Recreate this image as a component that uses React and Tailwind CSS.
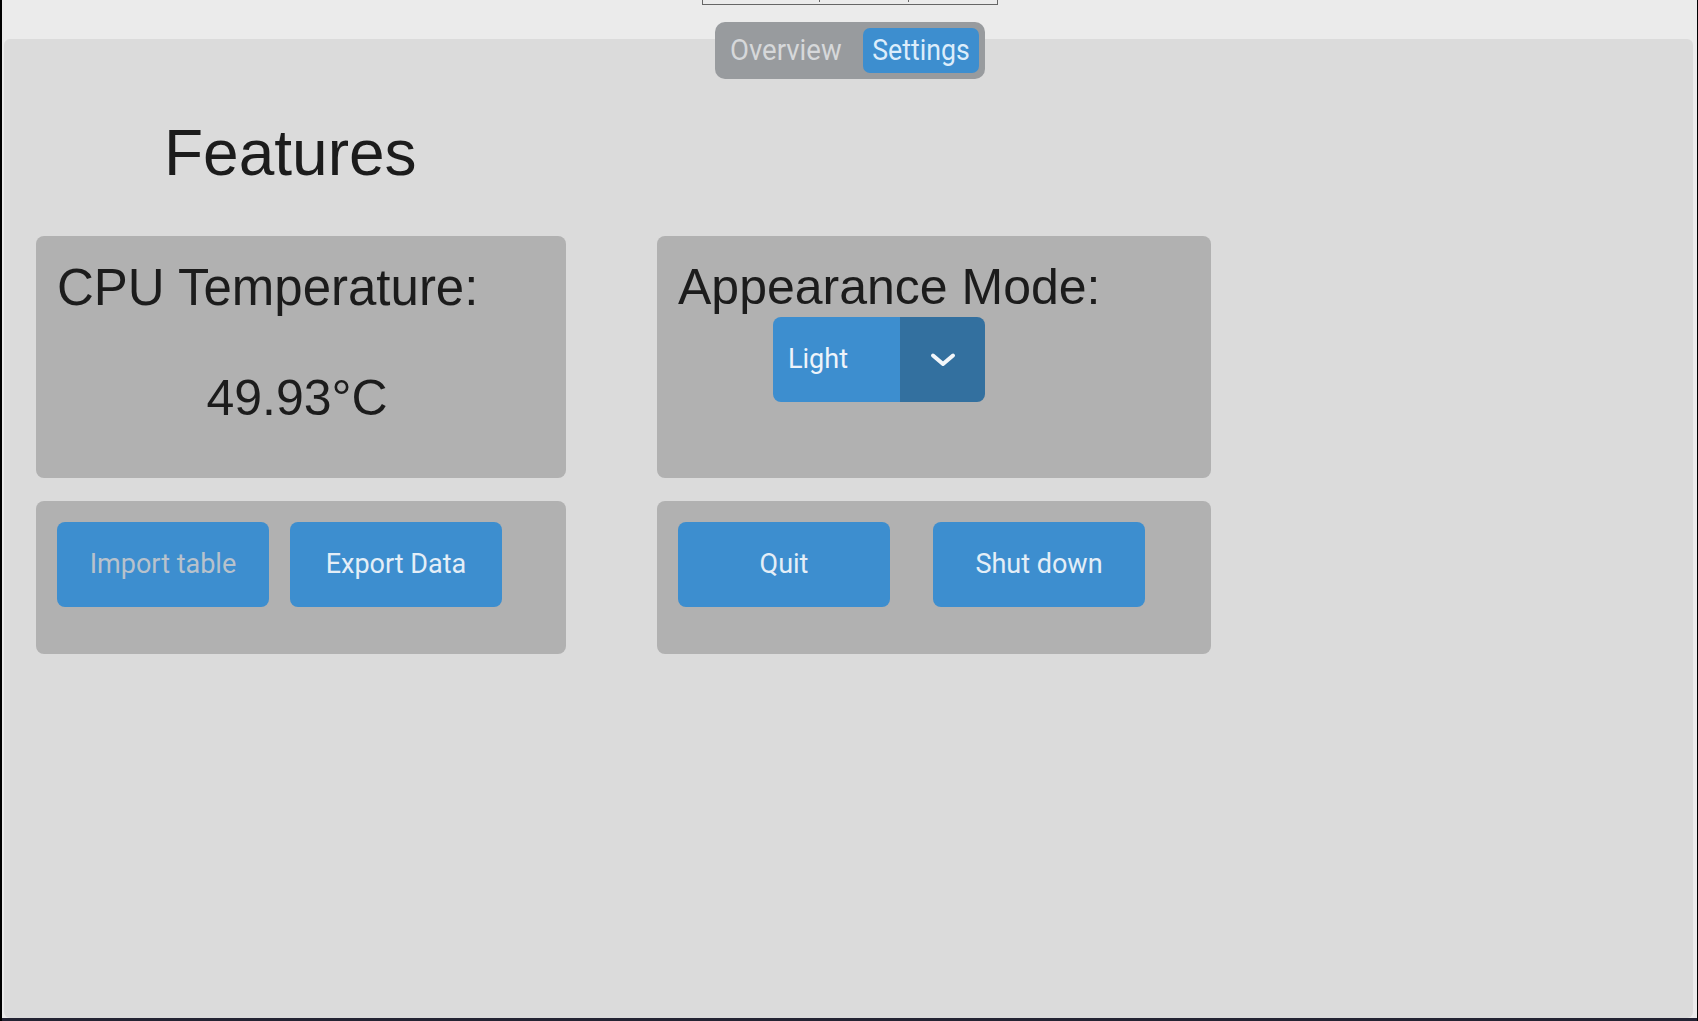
import React from 'react';

const sans = { fontFamily: '"Liberation Sans", Arial, sans-serif' };
const roboto = { fontFamily: 'Roboto, "Noto Sans", sans-serif' };

const ActionButton = ({ label, dim }) => (
    <button
        className={`w-[212px] h-[85px] rounded-[8px] bg-[#3d8ecf] flex items-center justify-center text-[27px] leading-none ${dim ? 'text-[#b8c2cc]' : 'text-[#e4eef7]'}`}
        style={roboto}
    >
        {label}
    </button>
);

const App = () => {
    return (
        <div className="relative w-[1698px] h-[1021px] overflow-hidden flex flex-col bg-[#ebebeb] border-l-2 border-r border-black">
            {/* top strip with the little bracket line */}
            <div className="h-[39px] shrink-0 flex justify-center">
                <div className="w-[296px] h-[5px] border-x border-b border-[#666] flex items-start">
                    <div className="ml-[116px] w-px h-[2px] bg-[#666]" />
                    <div className="ml-[88px] w-px h-[2px] bg-[#666]" />
                </div>
            </div>

            {/* segmented tab, sits over the strip and the panel */}
            <div className="absolute top-[22px] left-1/2 -translate-x-1/2 flex gap-[6px] p-[6px] rounded-[10px] bg-[#989b9e]" style={roboto}>
                <div className="w-[136px] h-[45px] flex items-center justify-center pr-[6px] text-[#d6d8da]">
                    <span className="inline-block text-[29px] leading-none scale-x-[0.95]">Overview</span>
                </div>
                <div className="w-[116px] h-[45px] rounded-[7px] bg-[#3d8ecf] flex items-center justify-center text-[#dcedfb]">
                    <span className="inline-block text-[29px] leading-none scale-x-[0.92]">Settings</span>
                </div>
            </div>

            <main className="flex-1 ml-[2px] mr-[4px] rounded-[6px] bg-[#dbdbdb] pl-[32px] pt-[82px]">
                <h1 className="ml-[128px] text-[64px] leading-none text-[#1c1c1c]" style={sans}>
                    Features
                </h1>

                <div className="mt-[51px] grid grid-cols-[530px_554px] grid-rows-[242px_153px] gap-x-[91px] gap-y-[23px]">
                    <section className="rounded-[8px] bg-[#b1b1b1] pt-[26px] pl-[21px] flex flex-col text-[#1c1c1c]" style={sans}>
                        <div className="text-[51px] leading-none whitespace-nowrap">CPU Temperature:</div>
                        <div className="mt-[60px] pr-[29px] text-center text-[50px] leading-none">49.93°C</div>
                    </section>

                    <section className="rounded-[8px] bg-[#b1b1b1] pt-[26px] pl-[21px] flex flex-col text-[#1c1c1c]" style={sans}>
                        <div className="text-[50px] leading-none whitespace-nowrap">Appearance Mode:</div>
                        <div className="mt-[5px] ml-[95px] flex w-[212px] h-[85px] rounded-[8px] overflow-hidden" style={roboto}>
                            <div className="w-[127px] bg-[#3d8ecf] flex items-center pl-[15px] text-[27px] leading-none text-[#eef4fa]">
                                Light
                            </div>
                            <div className="flex-1 bg-[#33709f] flex items-center justify-center">
                                <svg width="28" height="16" viewBox="0 0 28 16" fill="none">
                                    <polyline points="4,3.5 14,12 24,3.5" stroke="#f2f6fa" strokeWidth="4" strokeLinecap="round" strokeLinejoin="round" />
                                </svg>
                            </div>
                        </div>
                    </section>

                    <section className="rounded-[8px] bg-[#b1b1b1] pt-[21px] pl-[21px] flex items-start gap-[21px]">
                        <ActionButton label="Import table" dim />
                        <ActionButton label="Export Data" />
                    </section>

                    <section className="rounded-[8px] bg-[#b1b1b1] pt-[21px] pl-[21px] flex items-start gap-[43px]">
                        <ActionButton label="Quit" />
                        <ActionButton label="Shut down" />
                    </section>
                </div>
            </main>

            <div className="h-[3px] shrink-0 bg-[#232333]" />
        </div>
    );
};

export default App;
